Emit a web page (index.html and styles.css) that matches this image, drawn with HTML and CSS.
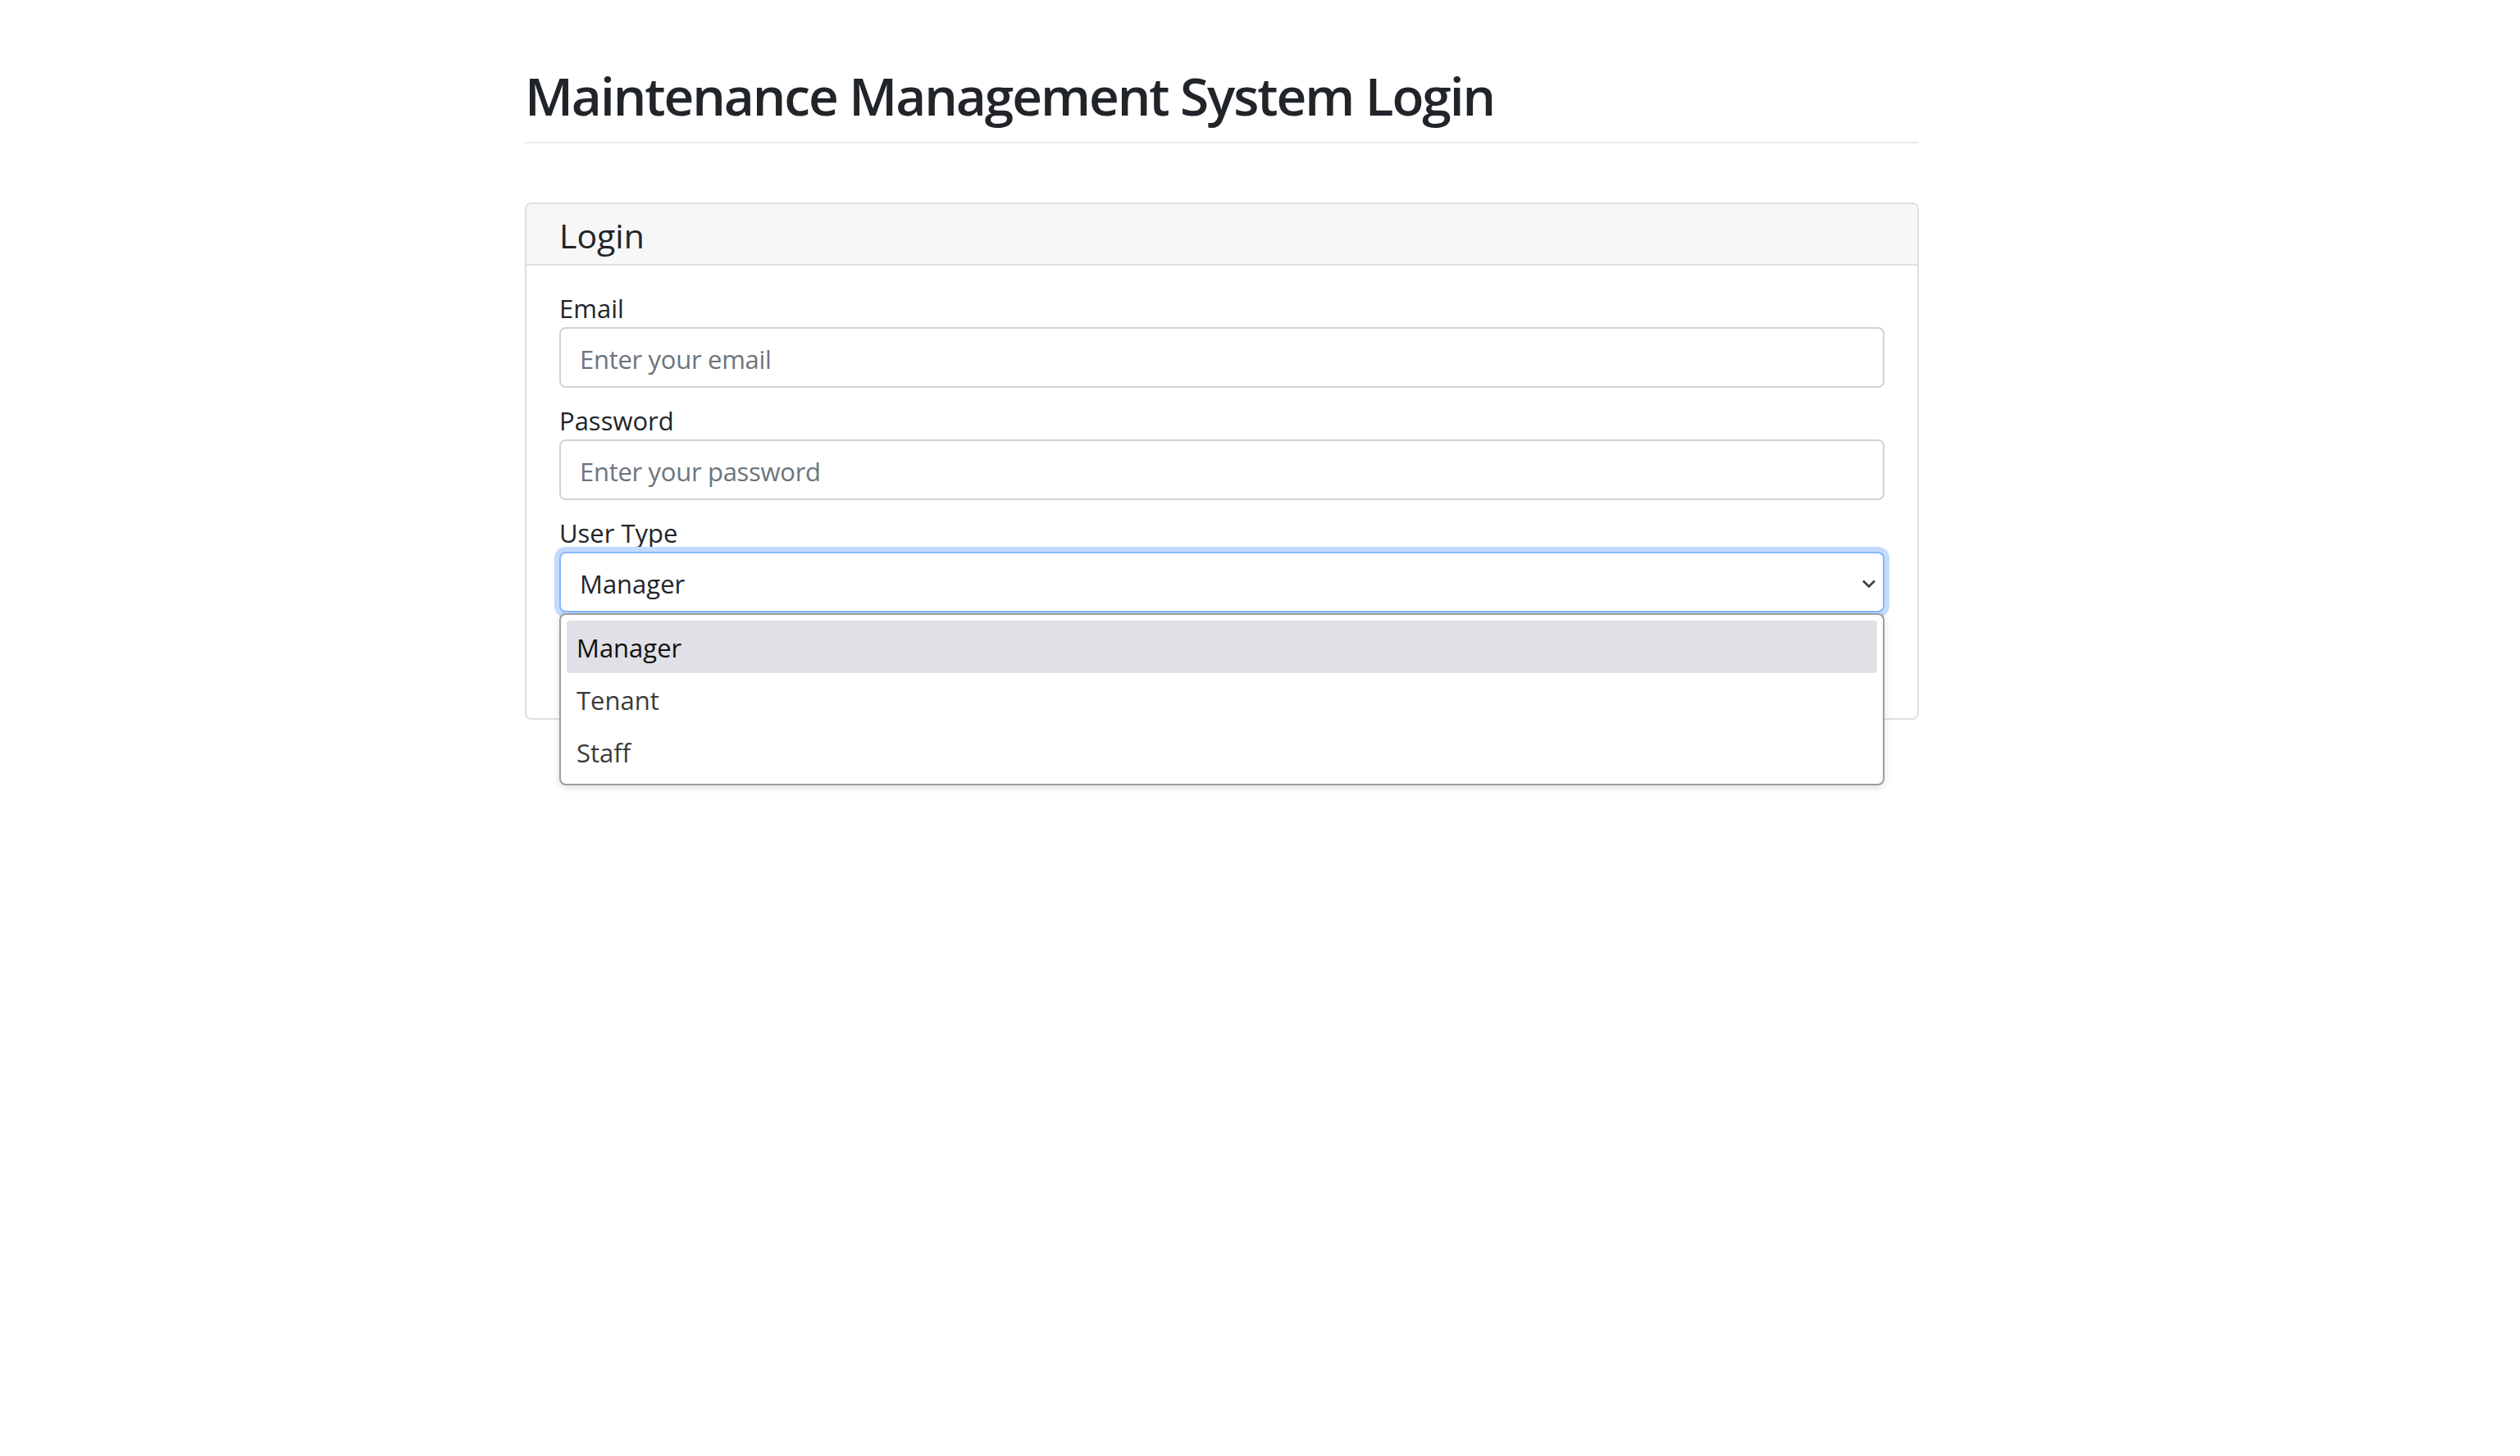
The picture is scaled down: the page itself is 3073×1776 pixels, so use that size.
FILE: index.html
```html
<!DOCTYPE html>
<html lang="en">
<head>
<meta charset="utf-8">
<title>Maintenance Management System Login</title>
<link rel="stylesheet" href="styles.css">
</head>
<body>
<div class="container">
  <h1 class="page-title">Maintenance Management System Login</h1>
  <hr class="divider">
  <div class="card">
    <div class="card-header">Login</div>
    <div class="card-body">
      <form class="login-form">
        <div class="field">
          <label class="field-label" for="email">Email</label>
          <input class="field-input" id="email" type="email" placeholder="Enter your email">
        </div>
        <div class="field">
          <label class="field-label" for="password">Password</label>
          <input class="field-input" id="password" type="password" placeholder="Enter your password">
        </div>
        <div class="field">
          <label class="field-label">User Type</label>
          <div class="select-wrap">
            <div class="select-box">
              <span class="select-value">Manager</span>
              <svg class="chevron" width="18" height="12" viewBox="0 0 18 12"><path d="M2 2.5l7 7 7-7" fill="none" stroke="#3a3d41" stroke-width="2.6"/></svg>
            </div>
            <ul class="select-menu">
              <li class="option active">Manager</li>
              <li class="option">Tenant</li>
              <li class="option">Staff</li>
            </ul>
          </div>
        </div>
      </form>
    </div>
  </div>
</div>
</body>
</html>
```
FILE: styles.css
```css
* {
  box-sizing: border-box;
}

html,
body {
  min-height: 100%;
}

body {
  margin: 0;
  min-height: 100vh;
  font-family: "Open Sans", "Noto Sans", sans-serif;
  color: #212529;
  background: #fff;
}

.container {
  width: 1700px;
  min-height: 1200px;
  margin-left: 640px;
  padding-top: 78px;
}

.page-title {
  margin: 0;
  font-size: 64px;
  line-height: 77px;
  font-weight: 600;
  letter-spacing: -2.1px;
}

.divider {
  margin: 18px 0 0;
  height: 0;
  border: 0;
  border-top: 2px solid #e9e9ee;
}

.card {
  margin-top: 72px;
  border: 2px solid #dfdfdf;
  border-radius: 8px;
}

.card-header {
  background: #f7f7f7;
  border-bottom: 2px solid #dfdfdf;
  border-radius: 6px 6px 0 0;
  padding: 14px 40px 10px;
  font-size: 41px;
  line-height: 49px;
}

.card-body {
  padding: 29px 40px 112px;
}

.field {
  margin-bottom: 17px;
}

.field-label {
  display: block;
  font-size: 31px;
  line-height: 46px;
}

.field-input {
  display: block;
  width: 100%;
  height: 74px;
  padding: 4px 23px 0;
  border: 2px solid #ced4da;
  border-radius: 8px;
  font-family: inherit;
  font-size: 31px;
  letter-spacing: -0.3px;
  color: #212529;
  background: #fff;
}

.field-input::placeholder {
  color: #6c757d;
  opacity: 1;
}

.select-wrap {
  position: relative;
}

.select-box {
  display: flex;
  align-items: center;
  justify-content: space-between;
  height: 74px;
  padding: 4px 8px 0 23px;
  border: 2px solid #86b7fe;
  border-radius: 8px;
  box-shadow: 0 0 0 6px #c3dbfd;
  font-size: 31px;
  color: #212529;
  background: #fff;
}

.chevron {
  display: block;
}

.select-menu {
  position: absolute;
  top: calc(100% + 1px);
  left: 0;
  right: 0;
  z-index: 10;
  margin: 0;
  padding: 7px;
  list-style: none;
  background: #fff;
  border: 2px solid #9e9e9e;
  border-radius: 8px;
  box-shadow: 0 3px 8px rgba(0, 0, 0, 0.12);
}

.option {
  height: 64px;
  line-height: 66px;
  padding-left: 12px;
  font-size: 31px;
  color: #3b3b3b;
  border-radius: 4px;
}

.option.active {
  background: #e0e0e6;
  color: #111;
}
```
